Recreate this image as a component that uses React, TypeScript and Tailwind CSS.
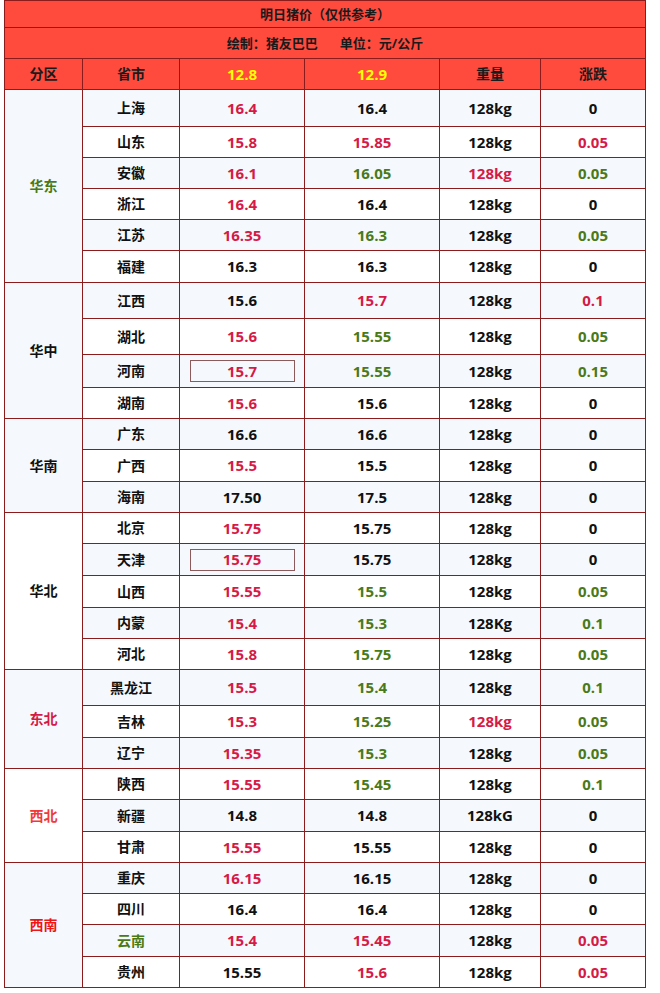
import React from "react";

type C = "r" | "g" | "k";
type Row = {
  p: string;
  pc?: C;
  a: string;
  ac: C;
  b: string;
  bc: C;
  w: string;
  wc: C;
  d: string;
  dc: C;
  box?: boolean;
  h: number;
};
type Region = { name: string; cls: string; rows: Row[] };

const colorCls: Record<C, string> = {
  r: "text-[#d61a46]",
  g: "text-[#4a7a18]",
  k: "text-[#111111]",
};

const regions: Region[] = [
  {
    name: "华东",
    cls: "text-[#4a7a18]",
    rows: [
      { p: "上海", a: "16.4", ac: "r", b: "16.4", bc: "k", w: "128kg", wc: "k", d: "0", dc: "k", h: 37 },
      { p: "山东", a: "15.8", ac: "r", b: "15.85", bc: "r", w: "128kg", wc: "k", d: "0.05", dc: "r", h: 31 },
      { p: "安徽", a: "16.1", ac: "r", b: "16.05", bc: "g", w: "128kg", wc: "r", d: "0.05", dc: "g", h: 31 },
      { p: "浙江", a: "16.4", ac: "r", b: "16.4", bc: "k", w: "128kg", wc: "k", d: "0", dc: "k", h: 31 },
      { p: "江苏", a: "16.35", ac: "r", b: "16.3", bc: "g", w: "128kg", wc: "k", d: "0.05", dc: "g", h: 31 },
      { p: "福建", a: "16.3", ac: "k", b: "16.3", bc: "k", w: "128kg", wc: "k", d: "0", dc: "k", h: 32 },
    ],
  },
  {
    name: "华中",
    cls: "text-[#111111]",
    rows: [
      { p: "江西", a: "15.6", ac: "k", b: "15.7", bc: "r", w: "128kg", wc: "k", d: "0.1", dc: "r", h: 36 },
      { p: "湖北", a: "15.6", ac: "r", b: "15.55", bc: "g", w: "128kg", wc: "k", d: "0.05", dc: "g", h: 36 },
      { p: "河南", a: "15.7", ac: "r", b: "15.55", bc: "g", w: "128kg", wc: "k", d: "0.15", dc: "g", box: true, h: 33 },
      { p: "湖南", a: "15.6", ac: "r", b: "15.6", bc: "k", w: "128kg", wc: "k", d: "0", dc: "k", h: 31 },
    ],
  },
  {
    name: "华南",
    cls: "text-[#111111]",
    rows: [
      { p: "广东", a: "16.6", ac: "k", b: "16.6", bc: "k", w: "128kg", wc: "k", d: "0", dc: "k", h: 31 },
      { p: "广西", a: "15.5", ac: "r", b: "15.5", bc: "k", w: "128kg", wc: "k", d: "0", dc: "k", h: 32 },
      { p: "海南", a: "17.50", ac: "k", b: "17.5", bc: "k", w: "128kg", wc: "k", d: "0", dc: "k", h: 31 },
    ],
  },
  {
    name: "华北",
    cls: "text-[#111111]",
    rows: [
      { p: "北京", a: "15.75", ac: "r", b: "15.75", bc: "k", w: "128kg", wc: "k", d: "0", dc: "k", h: 31 },
      { p: "天津", a: "15.75", ac: "r", b: "15.75", bc: "k", w: "128kg", wc: "k", d: "0", dc: "k", box: true, h: 32 },
      { p: "山西", a: "15.55", ac: "r", b: "15.5", bc: "g", w: "128kg", wc: "k", d: "0.05", dc: "g", h: 32 },
      { p: "内蒙", a: "15.4", ac: "r", b: "15.3", bc: "g", w: "128Kg", wc: "k", d: "0.1", dc: "g", h: 31 },
      { p: "河北", a: "15.8", ac: "r", b: "15.75", bc: "g", w: "128kg", wc: "k", d: "0.05", dc: "g", h: 31 },
    ],
  },
  {
    name: "东北",
    cls: "text-[#d61a46]",
    rows: [
      { p: "黑龙江", a: "15.5", ac: "r", b: "15.4", bc: "g", w: "128kg", wc: "k", d: "0.1", dc: "g", h: 36 },
      { p: "吉林", a: "15.3", ac: "r", b: "15.25", bc: "g", w: "128kg", wc: "r", d: "0.05", dc: "g", h: 32 },
      { p: "辽宁", a: "15.35", ac: "r", b: "15.3", bc: "g", w: "128kg", wc: "k", d: "0.05", dc: "g", h: 31 },
    ],
  },
  {
    name: "西北",
    cls: "text-[#f03a3a]",
    rows: [
      { p: "陕西", a: "15.55", ac: "r", b: "15.45", bc: "g", w: "128kg", wc: "k", d: "0.1", dc: "g", h: 31 },
      { p: "新疆", a: "14.8", ac: "k", b: "14.8", bc: "k", w: "128kG", wc: "k", d: "0", dc: "k", h: 32 },
      { p: "甘肃", a: "15.55", ac: "r", b: "15.55", bc: "k", w: "128kg", wc: "k", d: "0", dc: "k", h: 31 },
    ],
  },
  {
    name: "西南",
    cls: "text-[#ee1515]",
    rows: [
      { p: "重庆", a: "16.15", ac: "r", b: "16.15", bc: "k", w: "128kg", wc: "k", d: "0", dc: "k", h: 31 },
      { p: "四川", a: "16.4", ac: "k", b: "16.4", bc: "k", w: "128kg", wc: "k", d: "0", dc: "k", h: 31 },
      { p: "云南", pc: "g", a: "15.4", ac: "r", b: "15.45", bc: "r", w: "128kg", wc: "k", d: "0.05", dc: "r", h: 32 },
      { p: "贵州", a: "15.55", ac: "k", b: "15.6", bc: "r", w: "128kg", wc: "k", d: "0.05", dc: "r", h: 31 },
    ],
  },
];

const td = "border border-[#8c1c1c] text-center align-middle p-0";
const num = "text-[15px]";

export default function App() {
  let idx = 0;
  return (
    <div
      className="w-[660px] h-[993px] bg-white"
      style={{ fontFamily: '"Open Sans", "Noto Sans CJK SC", sans-serif' }}
    >
      <table className="ml-[4px] border-collapse table-fixed w-[641px] font-bold text-[14px] leading-none">
        <colgroup>
          <col className="w-[78px]" />
          <col className="w-[97px]" />
          <col className="w-[125px]" />
          <col className="w-[135px]" />
          <col className="w-[101px]" />
          <col className="w-[105px]" />
        </colgroup>
        <tbody>
          <tr className="bg-[#ff4b3e]">
            <td colSpan={6} className={`${td} h-[27px] text-[13px] text-[#1a1a1a]`}>
              明日猪价（仅供参考）
            </td>
          </tr>
          <tr className="bg-[#ff4b3e]">
            <td colSpan={6} className={`${td} h-[31px] text-[13px] text-[#1a1a1a]`}>
              <span>绘制：猪友巴巴</span>
              <span className="ml-[22px]">单位：元/公斤</span>
            </td>
          </tr>
          <tr className="bg-[#ff4b3e] text-[#1a1a1a]">
            <td className={`${td} h-[31px]`}>分区</td>
            <td className={td}>省市</td>
            <td className={`${td} ${num} text-[#ffff00]`}>12.8</td>
            <td className={`${td} ${num} text-[#ffff00]`}>12.9</td>
            <td className={td}>重量</td>
            <td className={td}>涨跌</td>
          </tr>
          {regions.map((rg) =>
            rg.rows.map((r, i) => {
              const light = idx % 2 === 0;
              idx++;
              const bg = light ? "bg-[#f5f9fd]" : "bg-white";
              return (
                <tr key={rg.name + r.p} className={bg}>
                  {i === 0 && (
                    <td rowSpan={rg.rows.length} className={`${td} ${rg.cls}`}>
                      {rg.name}
                    </td>
                  )}
                  <td className={`${td} ${colorCls[r.pc ?? "k"]}`} style={{ height: r.h }}>
                    {r.p}
                  </td>
                  <td className={`${td} ${num} ${colorCls[r.ac]}`}>
                    {r.box ? (
                      <div className="mx-auto w-[105px] h-[22px] border border-[#8c5a5a] flex items-center justify-center">
                        {r.a}
                      </div>
                    ) : (
                      r.a
                    )}
                  </td>
                  <td className={`${td} ${num} ${colorCls[r.bc]}`}>{r.b}</td>
                  <td className={`${td} ${num} ${colorCls[r.wc]}`}>{r.w}</td>
                  <td className={`${td} ${num} ${colorCls[r.dc]}`}>{r.d}</td>
                </tr>
              );
            })
          )}
        </tbody>
      </table>
    </div>
  );
}
